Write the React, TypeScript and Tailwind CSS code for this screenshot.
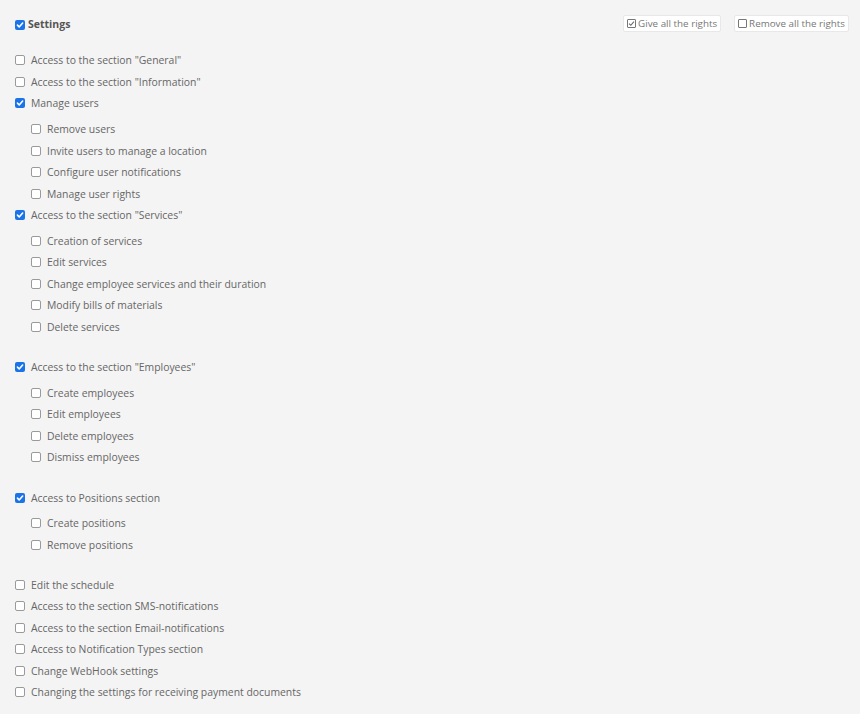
import React from "react";

type Item = { label: string; checked?: boolean; sub?: boolean; mt?: string };

const Box = ({ checked }: { checked?: boolean }) =>
  checked ? (
    <span className="w-[10px] h-[10px] rounded-[2px] bg-[#1a73e8] flex items-center justify-center shrink-0">
      <svg width="8" height="8" viewBox="0 0 10 10">
        <path d="M1.8 5.2 L4 7.4 L8.3 2.6" fill="none" stroke="#fff" strokeWidth="2" strokeLinecap="round" strokeLinejoin="round" />
      </svg>
    </span>
  ) : (
    <span className="w-[10px] h-[10px] rounded-[2px] border border-[#9a9a9a] bg-white shrink-0" />
  );

const Row = ({ label, checked, sub, mt }: Item) => (
  <div className={`h-[21.5px] flex items-center gap-[6px] ${sub ? "pl-[16px]" : ""} ${mt ?? ""}`}>
    <Box checked={checked} />
    <span className="text-[10.4px] text-[#666] leading-none">{label}</span>
  </div>
);

export default function App() {
  const font = { fontFamily: '"Open Sans", "Noto Sans", sans-serif' };
  return (
    <div className="w-[860px] h-[714px] bg-[#f4f4f4] pl-[15px] pr-[11px] pt-[15px]" style={font}>
      <div className="flex items-center justify-between h-[17px]">
        <div className="flex items-center gap-[3px] pt-[2px]">
          <Box checked />
          <span className="text-[10.5px] font-bold text-[#555] leading-none">Settings</span>
        </div>
        <div className="flex items-center gap-[13px]">
          <div className="h-[17px] pl-[3px] pr-[3px] bg-white border border-[#e8e8e8] rounded-[2px] flex items-center gap-[2px]">
            <span className="w-[9px] h-[9px] border border-[#777] rounded-[1px] flex items-center justify-center">
              <svg width="7" height="7" viewBox="0 0 10 10">
                <path d="M1.5 5.2 L4 7.6 L8.5 2.4" fill="none" stroke="#666" strokeWidth="1.5" />
              </svg>
            </span>
            <span className="text-[9.8px] text-[#777] leading-none">Give all the rights</span>
          </div>
          <div className="h-[17px] pl-[3px] pr-[3px] bg-white border border-[#e8e8e8] rounded-[2px] flex items-center gap-[2px]">
            <span className="w-[9px] h-[9px] border border-[#777] rounded-[1px]" />
            <span className="text-[9.8px] text-[#777] leading-none">Remove all the rights</span>
          </div>
        </div>
      </div>
      <div className="flex flex-col mt-[17.5px]">
        <Row label={'Access to the section "General"'} />
        <Row label={'Access to the section "Information"'} />
        <Row label="Manage users" checked />
        <Row label="Remove users" sub mt="mt-[4.5px]" />
        <Row label="Invite users to manage a location" sub />
        <Row label="Configure user notifications" sub />
        <Row label="Manage user rights" sub />
        <Row label={'Access to the section "Services"'} checked />
        <Row label="Creation of services" sub mt="mt-[4px]" />
        <Row label="Edit services" sub />
        <Row label="Change employee services and their duration" sub />
        <Row label="Modify bills of materials" sub />
        <Row label="Delete services" sub />
        <Row label={'Access to the section "Employees"'} checked mt="mt-[19px]" />
        <Row label="Create employees" sub mt="mt-[4px]" />
        <Row label="Edit employees" sub />
        <Row label="Delete employees" sub />
        <Row label="Dismiss employees" sub />
        <Row label="Access to Positions section" checked mt="mt-[19.5px]" />
        <Row label="Create positions" sub mt="mt-[3.5px]" />
        <Row label="Remove positions" sub />
        <Row label="Edit the schedule" mt="mt-[18.5px]" />
        <Row label="Access to the section SMS-notifications" />
        <Row label="Access to the section Email-notifications" />
        <Row label="Access to Notification Types section" />
        <Row label="Change WebHook settings" />
        <Row label="Changing the settings for receiving payment documents" />
      </div>
    </div>
  );
}
